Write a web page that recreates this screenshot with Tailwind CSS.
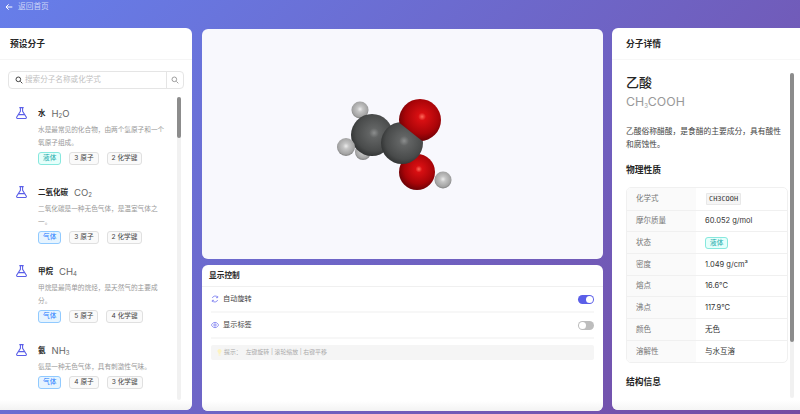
<!DOCTYPE html>
<html lang="zh">
<head>
<meta charset="utf-8"/>
<title>分子查看器</title>
<script src="https://cdn.jsdelivr.net/npm/@tailwindcss/browser@4"></script>
</head>
<body class="w-[800px] h-[414px] overflow-hidden bg-linear-[135deg,#667eea,#764ba2] text-[#262626] font-['Inter','Noto_Sans_CJK_SC',sans-serif]">
<!-- top bar -->
<header class="h-[28px] pt-[1px] pl-[5px] flex items-start gap-[5px] text-[7.7px] leading-[12px] text-white/70">
  <svg class="w-[8px] h-[8px] mt-[2px]" viewBox="0 0 24 24" fill="none" stroke="#fff" stroke-width="3"><path d="M22 12H3M11 4l-8 8 8 8"/></svg>
  <span>返回首页</span>
</header>

<main class="flex h-[382px]">
  <!-- preset list -->
  <aside class="relative w-[192px] shrink-0 bg-white rounded-r-[6px] flex flex-col overflow-hidden">
    <div class="h-[32px] shrink-0 pl-[10px] pt-[2px] flex items-center text-[8.75px] font-semibold border-b border-[#f5f5f5]">预设分子</div>
    <div class="mt-[11px] mx-[8px] h-[18px] shrink-0 border border-[#e5e5e5] rounded-[4px] flex items-center text-[7.6px] text-[#bfbfbf]">
      <svg class="w-[8px] h-[8px] ml-[6px] mr-[2px]" viewBox="0 0 24 24" fill="none" stroke="#444" stroke-width="3"><circle cx="10" cy="10" r="7"/><path d="M16 16l6 6"/></svg>
      <span class="flex-1">搜索分子名称或化学式</span>
      <span class="w-[17px] h-full border-l border-[#e5e5e5] flex items-center justify-center">
        <svg class="w-[8px] h-[8px]" viewBox="0 0 24 24" fill="none" stroke="#8c8c8c" stroke-width="2.5"><circle cx="10" cy="10" r="7"/><path d="M16 16l6 6"/></svg>
      </span>
    </div>
    <div class="relative flex-1 mt-[8px] pl-[15px]">
      <div class="absolute left-[177px] top-0 w-[4px] h-[303px] bg-[#f1f1f1] rounded-full"></div>
      <div class="absolute left-[177px] top-0 w-[4px] h-[41px] bg-[#8c8c8c] rounded-full"></div>

      <div class="flex gap-[10px] h-[79px] pt-[10px]">
        <svg class="w-[13px] h-[14px] shrink-0 -mt-[1px]" viewBox="0 0 24 24" fill="none" stroke="#5b5fe8" stroke-width="2"><path d="M8 2h8M10 2v7L3 20a1.5 1.5 0 0 0 1.3 2h15.4a1.5 1.5 0 0 0 1.3-2L14 9V2M6 15h12"/></svg>
        <div class="w-[132px]">
          <div class="flex items-center gap-[6px] h-[14px] text-[7.5px] font-semibold">水 <span class="text-[9.5px] font-normal text-[#666]">H<sub class="text-[6px]">2</sub>O</span></div>
          <p class="mt-[3px] text-[6.65px] leading-[13px] text-[#999]">水是最常见的化合物，由两个氢原子和一个氧原子组成。</p>
          <div class="mt-[2px] flex gap-[8px] text-[6.65px] leading-[11px]">
            <span class="px-[4px] rounded-[3px] border border-[#87e8de] bg-[#e6fffb] text-[#13a8a8]">液体</span>
            <span class="px-[4px] rounded-[3px] border border-[#e0e0e0] bg-[#fafafa] text-[#444]">3 原子</span>
            <span class="px-[4px] rounded-[3px] border border-[#e0e0e0] bg-[#fafafa] text-[#444]">2 化学键</span>
          </div>
        </div>
      </div>

      <div class="flex gap-[10px] h-[79px] pt-[10px]">
        <svg class="w-[13px] h-[14px] shrink-0 -mt-[1px]" viewBox="0 0 24 24" fill="none" stroke="#5b5fe8" stroke-width="2"><path d="M8 2h8M10 2v7L3 20a1.5 1.5 0 0 0 1.3 2h15.4a1.5 1.5 0 0 0 1.3-2L14 9V2M6 15h12"/></svg>
        <div class="w-[132px]">
          <div class="flex items-center gap-[6px] h-[14px] text-[7.5px] font-semibold">二氧化碳 <span class="text-[9.5px] font-normal text-[#666]">CO<sub class="text-[6px]">2</sub></span></div>
          <p class="mt-[3px] text-[6.65px] leading-[13px] text-[#999]">二氧化碳是一种无色气体，是温室气体之一。</p>
          <div class="mt-[2px] flex gap-[8px] text-[6.65px] leading-[11px]">
            <span class="px-[4px] rounded-[3px] border border-[#91caff] bg-[#e6f4ff] text-[#1677ff]">气体</span>
            <span class="px-[4px] rounded-[3px] border border-[#e0e0e0] bg-[#fafafa] text-[#444]">3 原子</span>
            <span class="px-[4px] rounded-[3px] border border-[#e0e0e0] bg-[#fafafa] text-[#444]">2 化学键</span>
          </div>
        </div>
      </div>

      <div class="flex gap-[10px] h-[79px] pt-[10px]">
        <svg class="w-[13px] h-[14px] shrink-0 -mt-[1px]" viewBox="0 0 24 24" fill="none" stroke="#5b5fe8" stroke-width="2"><path d="M8 2h8M10 2v7L3 20a1.5 1.5 0 0 0 1.3 2h15.4a1.5 1.5 0 0 0 1.3-2L14 9V2M6 15h12"/></svg>
        <div class="w-[132px]">
          <div class="flex items-center gap-[6px] h-[14px] text-[7.5px] font-semibold">甲烷 <span class="text-[9.5px] font-normal text-[#666]">CH<sub class="text-[6px]">4</sub></span></div>
          <p class="mt-[3px] text-[6.65px] leading-[13px] text-[#999]">甲烷是最简单的烷烃，是天然气的主要成分。</p>
          <div class="mt-[2px] flex gap-[8px] text-[6.65px] leading-[11px]">
            <span class="px-[4px] rounded-[3px] border border-[#91caff] bg-[#e6f4ff] text-[#1677ff]">气体</span>
            <span class="px-[4px] rounded-[3px] border border-[#e0e0e0] bg-[#fafafa] text-[#444]">5 原子</span>
            <span class="px-[4px] rounded-[3px] border border-[#e0e0e0] bg-[#fafafa] text-[#444]">4 化学键</span>
          </div>
        </div>
      </div>

      <div class="flex gap-[10px] h-[66px] pt-[10px]">
        <svg class="w-[13px] h-[14px] shrink-0 -mt-[1px]" viewBox="0 0 24 24" fill="none" stroke="#5b5fe8" stroke-width="2"><path d="M8 2h8M10 2v7L3 20a1.5 1.5 0 0 0 1.3 2h15.4a1.5 1.5 0 0 0 1.3-2L14 9V2M6 15h12"/></svg>
        <div class="w-[132px]">
          <div class="flex items-center gap-[6px] h-[14px] text-[7.5px] font-semibold">氨 <span class="text-[9.5px] font-normal text-[#666]">NH<sub class="text-[6px]">3</sub></span></div>
          <p class="mt-[3px] text-[6.65px] leading-[13px] text-[#999]">氨是一种无色气体，具有刺激性气味。</p>
          <div class="mt-[2px] flex gap-[8px] text-[6.65px] leading-[11px]">
            <span class="px-[4px] rounded-[3px] border border-[#91caff] bg-[#e6f4ff] text-[#1677ff]">气体</span>
            <span class="px-[4px] rounded-[3px] border border-[#e0e0e0] bg-[#fafafa] text-[#444]">4 原子</span>
            <span class="px-[4px] rounded-[3px] border border-[#e0e0e0] bg-[#fafafa] text-[#444]">3 化学键</span>
          </div>
        </div>
      </div>
    </div>
    <div class="absolute inset-x-0 bottom-0 h-[10px] bg-linear-to-b from-white/0 to-[#f3f3f3]"></div>
  </aside>

  <!-- viewer + controls -->
  <section class="w-[401px] ml-[10px] shrink-0 pt-[1px] flex flex-col gap-[6px]">
    <div class="h-[230px] shrink-0 rounded-[6px] bg-[#f8f8fd]">
      <svg class="w-full h-full" viewBox="202 29 401 230">
        <defs>
          <radialGradient id="red" cx="0.55" cy="0.42" r="0.58"><stop offset="0" stop-color="#ff6a5a"/><stop offset="0.16" stop-color="#d80f12"/><stop offset="0.7" stop-color="#a80408"/><stop offset="1" stop-color="#6e0206"/></radialGradient>
          <radialGradient id="carbon" cx="0.55" cy="0.45" r="0.58"><stop offset="0" stop-color="#8c8e8e"/><stop offset="0.2" stop-color="#626464"/><stop offset="0.75" stop-color="#494b4b"/><stop offset="1" stop-color="#303232"/></radialGradient>
          <radialGradient id="hydrogen" cx="0.5" cy="0.45" r="0.55"><stop offset="0" stop-color="#ececec"/><stop offset="0.3" stop-color="#c4c4c4"/><stop offset="0.8" stop-color="#a4a4a4"/><stop offset="1" stop-color="#7e7e7e"/></radialGradient>
          <!-- where the oxygen sphere meets the carbon sphere -->
          <clipPath id="oxygen-cut"><polygon points="380,107.5 450,163 460,90 390,80"/></clipPath>
        </defs>
        <circle cx="363" cy="152" r="8" fill="url(#hydrogen)"/>
        <circle cx="360" cy="110" r="8.5" fill="url(#hydrogen)"/>
        <circle cx="372" cy="135" r="21" fill="url(#carbon)"/>
        <circle cx="346" cy="147" r="9" fill="url(#hydrogen)"/>
        <circle cx="417" cy="172" r="18" fill="url(#red)"/>
        <circle cx="443" cy="180" r="8.5" fill="url(#hydrogen)"/>
        <circle cx="402" cy="143" r="21" fill="url(#carbon)"/>
        <circle cx="420" cy="120" r="21" fill="url(#red)" clip-path="url(#oxygen-cut)"/>
      </svg>
    </div>
    <div class="relative h-[146px] shrink-0 rounded-[6px] bg-white overflow-hidden">
      <div class="h-[22px] pl-[7px] pt-[1px] flex items-center text-[7.7px] font-semibold border-b border-[#f0f0f0]">显示控制</div>
      <div class="mx-[9px] h-[26px] flex items-center border-b-2 border-[#f7f7f7] text-[7.2px] text-[#444]">
        <svg class="w-[8px] h-[8px] mr-[4px]" viewBox="0 0 24 24" fill="none" stroke="#7d7ff0" stroke-width="2.6"><path d="M4 9a9 9 0 0 1 16-2M20 15a9 9 0 0 1-16 2M20 3v5h-5M4 21v-5h5"/></svg>
        <span class="flex-1">自动旋转</span>
        <span class="w-[16px] h-[9px] rounded-full bg-[#5b5fe8] flex items-center justify-end pr-[1px]"><span class="w-[7px] h-[7px] rounded-full bg-white"></span></span>
      </div>
      <div class="mx-[9px] h-[26px] flex items-center border-b-2 border-[#f7f7f7] text-[7.2px] text-[#444]">
        <svg class="w-[8px] h-[8px] mr-[4px]" viewBox="0 0 24 24" fill="none" stroke="#7d7ff0" stroke-width="2.6"><path d="M1 12s4-8 11-8 11 8 11 8-4 8-11 8-11-8-11-8z"/><circle cx="12" cy="12" r="3.5"/></svg>
        <span class="flex-1">显示标签</span>
        <span class="w-[16px] h-[9px] rounded-full bg-[#bdbdbd] flex items-center pl-[1px]"><span class="w-[7px] h-[7px] rounded-full bg-white"></span></span>
      </div>
      <div class="mt-[6px] mx-[9px] h-[15px] rounded-[2px] bg-[#f5f5f5] flex items-center pl-[6px] text-[5.9px] text-[#aaa]">
        <svg class="w-[5px] h-[7px] mr-[2px]" viewBox="0 0 10 14" fill="#fdf3c0"><path d="M5 0a4 4 0 0 0-2 7.5V10h4V7.5A4 4 0 0 0 5 0zM3 11h4v2H3z"/></svg>
        <span>提示：</span><span class="ml-[4px]">左键旋转 | 滚轮缩放 | 右键平移</span>
      </div>
      <div class="absolute inset-x-0 bottom-0 h-[10px] bg-linear-to-b from-white/0 to-[#f3f3f3]"></div>
    </div>
  </section>

  <!-- details -->
  <aside class="relative w-[200px] ml-[9px] shrink-0 bg-white rounded-l-[6px] overflow-hidden">
    <div class="h-[32px] pl-[14px] pt-[2px] flex items-center text-[8.75px] font-semibold border-b border-[#f7f7f7]">分子详情</div>
    <div class="absolute left-[178px] top-[45px] w-[4px] h-[325px] bg-[#f1f1f1] rounded-full"></div>
    <div class="absolute left-[178px] top-[45px] w-[4px] h-[269px] bg-[#8c8c8c] rounded-full"></div>
    <div class="pl-[14px] pt-[13px] w-[176px]">
      <h2 class="text-[13px] leading-[18px] font-medium">乙酸</h2>
      <p class="text-[12.3px] leading-[16px] mt-[3px] text-[#999]">CH<sub class="text-[6px]">3</sub>COOH</p>
      <p class="mt-[15px] text-[7.75px] leading-[13px] text-[#444]">乙酸俗称醋酸，是食醋的主要成分，具有酸性和腐蚀性。</p>
      <h3 class="mt-[13px] text-[8.75px] leading-[12px] font-semibold">物理性质</h3>
      <table class="mt-[11px] w-[162px] border-separate border-spacing-0 border border-[#f0f0f0] rounded-[5px] overflow-hidden text-[7.5px] table-fixed">
        <tbody class="text-[#333]">
          <tr class="h-[21.7px]"><td class="w-[69px] pl-[9px] bg-[#fafafa] text-[#777]">化学式</td><td class="pl-[9px]"><code class="px-[2px] py-[1px] ml-[1px] rounded-[1px] border border-[#e8e8e8] bg-[#f5f5f5] text-[6.9px] font-['DejaVu_Sans_Mono',monospace]">CH3COOH</code></td></tr>
          <tr class="h-[21.7px]"><td class="pl-[9px] bg-[#fafafa] text-[#777] border-t border-[#f0f0f0]">摩尔质量</td><td class="pl-[9px] border-t border-[#f0f0f0]">60.052 g/mol</td></tr>
          <tr class="h-[21.7px]"><td class="pl-[9px] bg-[#fafafa] text-[#777] border-t border-[#f0f0f0]">状态</td><td class="pl-[9px] border-t border-[#f0f0f0]"><span class="px-[4px] py-[1px] rounded-[3px] border border-[#87e8de] bg-[#e6fffb] text-[#13a8a8] text-[6.65px]">液体</span></td></tr>
          <tr class="h-[21.7px]"><td class="pl-[9px] bg-[#fafafa] text-[#777] border-t border-[#f0f0f0]">密度</td><td class="pl-[9px] border-t border-[#f0f0f0]">1.049 g/cm³</td></tr>
          <tr class="h-[21.7px]"><td class="pl-[9px] bg-[#fafafa] text-[#777] border-t border-[#f0f0f0]">熔点</td><td class="pl-[9px] border-t border-[#f0f0f0]">16.6°C</td></tr>
          <tr class="h-[21.7px]"><td class="pl-[9px] bg-[#fafafa] text-[#777] border-t border-[#f0f0f0]">沸点</td><td class="pl-[9px] border-t border-[#f0f0f0]">117.9°C</td></tr>
          <tr class="h-[21.7px]"><td class="pl-[9px] bg-[#fafafa] text-[#777] border-t border-[#f0f0f0]">颜色</td><td class="pl-[9px] border-t border-[#f0f0f0]">无色</td></tr>
          <tr class="h-[21.7px]"><td class="pl-[9px] bg-[#fafafa] text-[#777] border-t border-[#f0f0f0]">溶解性</td><td class="pl-[9px] border-t border-[#f0f0f0]">与水互溶</td></tr>
        </tbody>
      </table>
      <h3 class="mt-[13px] text-[8.75px] leading-[12px] font-semibold">结构信息</h3>
    </div>
    <div class="absolute inset-x-0 bottom-0 h-[10px] bg-linear-to-b from-white/0 to-[#f5f5f5]"></div>
  </aside>
</main>
</body>
</html>
